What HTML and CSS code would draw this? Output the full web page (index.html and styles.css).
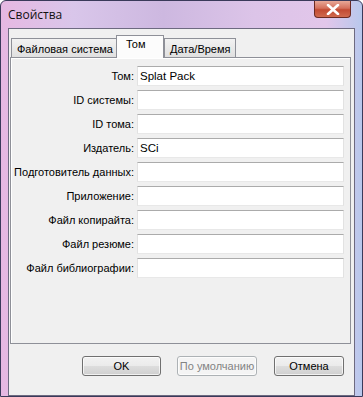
FILE: index.html
```html
<!DOCTYPE html>
<html lang="ru">
<head>
<meta charset="utf-8">
<link rel="stylesheet" href="styles.css">
</head>
<body>
<div class="window">
  <div class="titlebar">
    <span class="title">Свойства</span>
    <div class="close">
      <svg width="14" height="11" viewBox="0 0 14 11"><path d="M2 1 L12 10 M12 1 L2 10" stroke="#fff" stroke-width="2.6" stroke-linecap="round"/></svg>
    </div>
  </div>
  <div class="client">
    <div class="tabs">
      <div class="tab t1">Файловая система</div>
      <div class="tab active">Том</div>
      <div class="tab t3">Дата/Время</div>
    </div>
    <div class="panel">
      <div class="form">
        <label class="lbl">Том:</label><div class="field">Splat Pack</div>
        <label class="lbl">ID системы:</label><div class="field"></div>
        <label class="lbl">ID тома:</label><div class="field"></div>
        <label class="lbl">Издатель:</label><div class="field">SCi</div>
        <label class="lbl">Подготовитель данных:</label><div class="field"></div>
        <label class="lbl">Приложение:</label><div class="field"></div>
        <label class="lbl">Файл копирайта:</label><div class="field"></div>
        <label class="lbl">Файл резюме:</label><div class="field"></div>
        <label class="lbl">Файл библиографии:</label><div class="field"></div>
      </div>
    </div>
    <div class="buttons">
      <div class="btn ok">OK</div>
      <div class="btn def disabled">По умолчанию</div>
      <div class="btn cancel">Отмена</div>
    </div>
  </div>
</div>
</body>
</html>
```
FILE: styles.css
```css
html, body {
  margin: 0;
  padding: 0;
}
body {
  width: 363px;
  height: 397px;
  overflow: hidden;
  font-family: "Liberation Sans", Arial, sans-serif;
  font-size: 11px;
  color: #000;
}
.window {
  width: 363px;
  height: 397px;
  box-sizing: border-box;
  background: linear-gradient(90deg, #e6b8e2 0%, #d9c6ea 20%, #cdb8e0 45%, #dcc4e8 70%, #e2c6ea 90%, #b8c8ec 100%);
  border: 1px solid #3a3a5a;
  border-radius: 6px 6px 0 0;
  display: flex;
  flex-direction: column;
}
.titlebar {
  height: 27px;
  display: flex;
  justify-content: space-between;
  align-items: flex-start;
  padding-left: 7px;
  padding-right: 11px;
}
.title {
  font-family: "Open Sans", "Liberation Sans", sans-serif;
  font-size: 12px;
  line-height: 12px;
  margin-top: 8px;
  color: #111;
}
.close {
  width: 37px;
  height: 17px;
  box-sizing: border-box;
  border: 1px solid #6b2a22;
  border-top: none;
  border-radius: 0 0 4px 4px;
  background: linear-gradient(#e8a898 0%, #d4705c 45%, #c24a32 55%, #d06a4e 100%);
  display: flex;
  align-items: center;
  justify-content: center;
}
.client {
  margin: 0 7px;
  flex: 1;
  box-sizing: border-box;
  border: 1px solid #6d6a80;
  background: #f0f0f0;
  display: flex;
  flex-direction: column;
  padding: 6px 2px 0 1px;
}
.tabs {
  display: flex;
  height: 22px;
  align-items: flex-end;
  padding-left: 1px;
  position: relative;
  z-index: 1;
}
.tab {
  height: 19px;
  box-sizing: border-box;
  border: 1px solid #8e9098;
  border-bottom: none;
  background: linear-gradient(#f2f2f2, #e0e0e0);
  padding: 3px 0 0 5px;
  line-height: 15px;
  font-size: 11px;
  margin-right: -1px;
  white-space: nowrap;
  overflow: hidden;
}
.t1 { width: 107px; }
.t3 { width: 72px; }
.tab.active {
  width: 48px;
  height: 23px;
  background: #fcfcfc;
  padding-top: 1px;
  margin: 0 0 -1px -1px;
  padding-left: 9px;
  position: relative;
  z-index: 2;
}
.panel {
  height: 287px;
  box-sizing: border-box;
  border: 1px solid #8e9098;
  background: #f0f0f0;
  margin-right: 1px;
  box-shadow: inset 1px 1px 0 #fff;
}
.form {
  display: grid;
  grid-template-columns: 122px 207px;
  column-gap: 3px;
  row-gap: 4px;
  padding: 8px 0 0 1px;
}
.lbl {
  text-align: right;
  height: 20px;
  line-height: 20px;
  white-space: nowrap;
}
.field {
  height: 20px;
  box-sizing: border-box;
  background: #fff;
  border-top: 1px solid #ababab;
  border-left: 1px solid #e2e2e2;
  border-right: 1px solid #e2e2e2;
  border-bottom: 1px solid #e8e8e8;
  padding-left: 2px;
  line-height: 18px;
  font-size: 11.5px;
}
.buttons {
  display: flex;
  padding: 12px 0 0 72px;
}
.btn {
  height: 20px;
  box-sizing: border-box;
  border: 1px solid #707070;
  border-radius: 3px;
  background: linear-gradient(#f2f2f2 0%, #ebebeb 48%, #dddddd 52%, #cfcfcf 100%);
  box-shadow: inset 0 0 0 1px rgba(255,255,255,0.7);
  display: flex;
  align-items: center;
  justify-content: center;
  font-size: 11px;
}
.ok { width: 79px; }
.def { width: 80px; margin-left: 16px; }
.cancel { width: 70px; margin-left: 17px; }
.disabled {
  border-color: #adb2b5;
  background: #f4f4f4;
  color: #838383;
}
```
